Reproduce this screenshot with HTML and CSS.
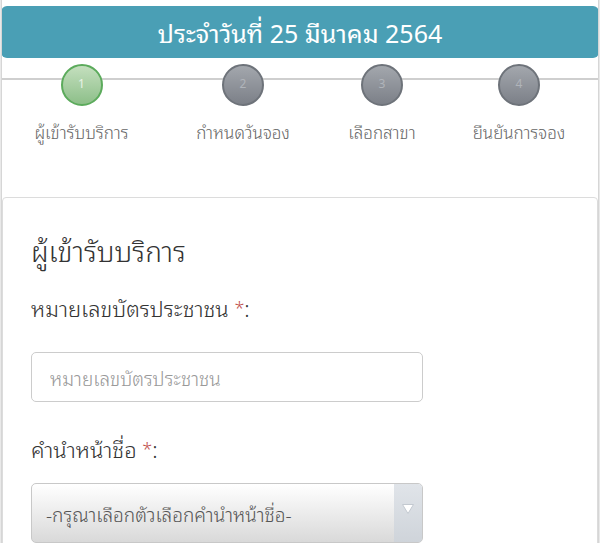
FILE: index.html
```html
<!DOCTYPE html>
<html lang="th">
<head>
<meta charset="utf-8">
<title>จองคิว</title>
<link rel="stylesheet" href="styles.css">
</head>
<body>
<div class="page">
  <div class="banner">ประจำวันที่ 25 มีนาคม 2564</div>
  <div class="steps">
    <div class="step active">
      <span class="dot">1</span>
      <span class="step-label">ผู้เข้ารับบริการ</span>
    </div>
    <div class="step">
      <span class="dot">2</span>
      <span class="step-label">กำหนดวันจอง</span>
    </div>
    <div class="step">
      <span class="dot">3</span>
      <span class="step-label">เลือกสาขา</span>
    </div>
    <div class="step">
      <span class="dot">4</span>
      <span class="step-label">ยืนยันการจอง</span>
    </div>
  </div>
  <div class="card">
    <h2 class="card-title">ผู้เข้ารับบริการ</h2>
    <label class="field-label" for="idcard">หมายเลขบัตรประชาชน <span class="req">*</span>:</label>
    <input class="text-input" id="idcard" type="text" placeholder="หมายเลขบัตรประชาชน">
    <label class="field-label field-label--select" for="prefix">คำนำหน้าชื่อ <span class="req">*</span>:</label>
    <div class="select" id="prefix">
      <span class="select-text">-กรุณาเลือกตัวเลือกคำนำหน้าชื่อ-</span>
      <span class="select-arrow">
        <svg width="12" height="10" viewBox="0 0 12 10"><path d="M0.5 0.5 H11.5 L6 9.5 Z" fill="#fff" stroke="#c3c9d0" stroke-width="1"/></svg>
      </span>
    </div>
  </div>
</div>
</body>
</html>
```

FILE: styles.css
```css
* { box-sizing: border-box; }
html, body { margin: 0; padding: 0; background: #e9e9e9; }
body {
  font-family: "Noto Sans Thai Looped", "Loma", "Garuda", "Waree", "Sawasdee", "Noto Sans Thai", "Noto Sans", "DejaVu Sans", sans-serif;
  color: #333;
}
.page {
  margin: 0 1px;
  height: 543px;
  overflow: hidden;
  background: #fff;
  border-left: 1px solid #d6d6d6;
  border-right: 1px solid #d6d6d6;
  padding-top: 6px;
}
.banner {
  margin: 0 -1px;
  height: 52px;
  background: #4a9fb5;
  border-radius: 6px;
  color: #fff;
  font-size: 25px;
  display: flex;
  align-items: center;
  justify-content: center;
}
.steps {
  display: grid;
  grid-template-columns: 161px 162px 116px 158px;
  margin: 6px -1px 0;
  background: linear-gradient(#cfcfcf, #cfcfcf) 0 14px / 100% 2px no-repeat;
  height: 133px;
}
.step {
  display: flex;
  flex-direction: column;
  align-items: center;
}
.dot {
  width: 42px;
  height: 42px;
  border-radius: 50%;
  border: 2px solid #6e737a;
  background: linear-gradient(#a3a7ad, #7c8088);
  color: #b0b4ba;
  font-size: 12px;
  display: flex;
  align-items: flex-start;
  justify-content: center;
  padding-top: 7px;
}
.step.active .dot {
  border-color: #5cab5c;
  background: linear-gradient(#c4dfbe, #8dbf89);
  color: #e8f3e6;
}
.step-label {
  margin-top: 12px;
  font-size: 17px;
  font-weight: 300;
  color: #666;
  white-space: nowrap;
}
.card {
  border: 1px solid #dcdcdc;
  border-radius: 4px;
  padding: 29px 28px 0;
  height: 400px;
  background: #fff;
  font-weight: 300;
}
.card-title {
  margin: 0 0 17px;
  font-size: 28px;
  font-weight: 300;
  color: #333;
}
.field-label {
  display: block;
  font-size: 22px;
  color: #333;
  margin-bottom: 27px;
}
.field-label--select { margin-bottom: 17px; }
.req { color: #c0504d; font-size: 18px; vertical-align: 2px; }
.text-input {
  display: block;
  width: 392px;
  height: 50px;
  border: 1px solid #ccc;
  border-radius: 5px;
  padding: 0 18px;
  font: inherit;
  font-size: 19px;
  color: #333;
  margin-bottom: 28px;
}
.text-input::placeholder { color: #999; }
.select {
  display: flex;
  width: 392px;
  height: 60px;
  border: 1px solid #c8c8c8;
  border-radius: 5px;
  overflow: hidden;
  background: linear-gradient(#ffffff, #d9d9d9);
}
.select-text {
  flex: 1;
  padding: 14px 0 0 14px;
  font-size: 19px;
  color: #555;
}
.select-arrow {
  width: 28px;
  background: linear-gradient(#e0e4e9, #cfd4da);
  display: flex;
  justify-content: center;
  padding-top: 20px;
}
```
